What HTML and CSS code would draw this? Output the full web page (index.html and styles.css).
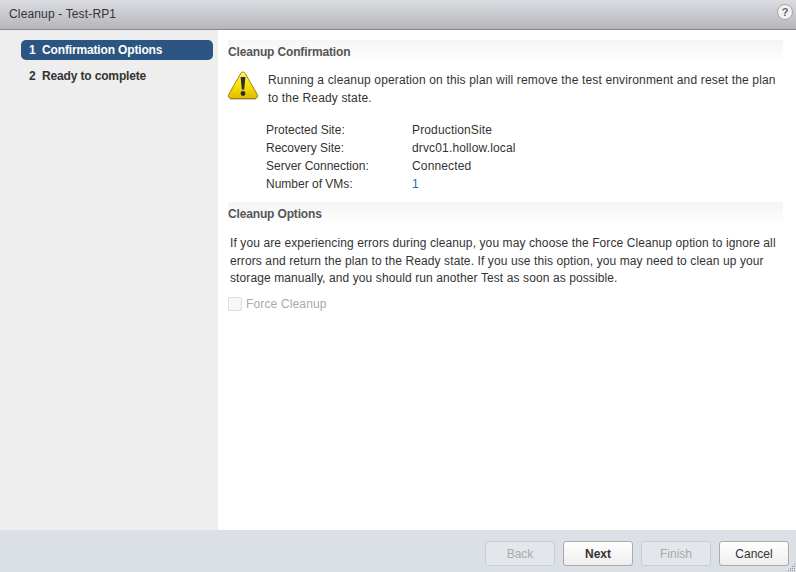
FILE: index.html
```html
<!DOCTYPE html>
<html lang="en">
<head>
<meta charset="utf-8">
<title>Cleanup - Test-RP1</title>
<link rel="stylesheet" href="styles.css">
</head>
<body>
<div class="dialog">
  <header class="titlebar">
    <span class="title">Cleanup - Test-RP1</span>
    <span class="help">?</span>
  </header>
  <div class="main">
    <nav class="steps">
      <div class="step active"><span class="num">1</span>Confirmation Options</div>
      <div class="step"><span class="num">2</span>Ready to complete</div>
    </nav>
    <section class="content">
      <h2 class="section-head">Cleanup Confirmation</h2>
      <div class="warning">
        <svg class="warn-icon" width="32" height="31" viewBox="0 0 32 31">
          <defs>
            <linearGradient id="wg" x1="0" y1="0" x2="0" y2="1">
              <stop offset="0" stop-color="#fff27a"/>
              <stop offset="0.5" stop-color="#f7e400"/>
              <stop offset="1" stop-color="#dcbc00"/>
            </linearGradient>
          </defs>
          <path d="M3 29.5 H29" stroke="#c9c9c9" stroke-width="1"/>
          <path d="M16 2 C14.8 2 14.2 2.8 13.6 3.8 L2 24 C0.8 26.2 1.6 28.5 4 28.5 L28 28.5 C30.4 28.5 31.2 26.2 30 24 L18.4 3.8 C17.8 2.8 17.2 2 16 2 Z" fill="url(#wg)" stroke="#a08600" stroke-width="1"/>
          <path d="M13.6 7 H18.4 L17.2 19.5 H14.8 Z" fill="#2e2e2e"/>
          <circle cx="16" cy="23.5" r="2.4" fill="#2e2e2e"/>
        </svg>
        <p class="warn-text">Running a cleanup operation on this plan will remove the test environment and reset the plan to the Ready state.</p>
      </div>
      <dl class="facts">
        <dt>Protected Site:</dt><dd>ProductionSite</dd>
        <dt>Recovery Site:</dt><dd>drvc01.hollow.local</dd>
        <dt>Server Connection:</dt><dd>Connected</dd>
        <dt>Number of VMs:</dt><dd class="link">1</dd>
      </dl>
      <h2 class="section-head second">Cleanup Options</h2>
      <p class="options-text">If you are experiencing errors during cleanup, you may choose the Force Cleanup option to ignore all errors and return the plan to the Ready state. If you use this option, you may need to clean up your storage manually, and you should run another Test as soon as possible.</p>
      <label class="force"><span class="check"></span>Force Cleanup</label>
    </section>
  </div>
  <footer class="footer">
    <button class="btn" disabled>Back</button>
    <button class="btn primary">Next</button>
    <button class="btn" disabled>Finish</button>
    <button class="btn">Cancel</button>
    <svg class="grip" width="10" height="10" viewBox="0 0 10 10">
      <g fill="#8b8f96">
        <rect x="8" y="2" width="1" height="1"/>
        <rect x="6" y="4" width="1" height="1"/><rect x="8" y="4" width="1" height="1"/>
        <rect x="4" y="6" width="1" height="1"/><rect x="6" y="6" width="1" height="1"/><rect x="8" y="6" width="1" height="1"/>
        <rect x="2" y="8" width="1" height="1"/><rect x="4" y="8" width="1" height="1"/><rect x="6" y="8" width="1" height="1"/><rect x="8" y="8" width="1" height="1"/>
      </g>
    </svg>
  </footer>
</div>
</body>
</html>
```
FILE: styles.css
```css
* { box-sizing: border-box; }
html, body { margin: 0; height: 100%; }
body {
  font-family: "Liberation Sans", Arial, sans-serif;
  font-size: 12px;
  color: #333;
  background: #fff;
  overflow: hidden;
}
.dialog { display: flex; flex-direction: column; height: 572px; }
.titlebar {
  height: 30px;
  flex: none;
  display: flex;
  align-items: center;
  justify-content: space-between;
  padding: 0 3px 2px 9px;
  background: linear-gradient(#dcdde2, #b5b6ba);
  border-bottom: 1px solid #8a8a8a;
}
.title { color: #333; letter-spacing: 0.15px; }
.help {
  width: 16px;
  height: 16px;
  border-radius: 50%;
  margin-top: -3px;
  background: #f2f2f2;
  border: 1px solid #a5a5a8;
  color: #666;
  font-weight: bold;
  font-size: 11px;
  line-height: 14px;
  text-align: center;
}
.main { flex: 1; display: flex; min-height: 0; }
.steps {
  width: 218px;
  flex: none;
  background: #eee;
  padding: 10px 5px 0 21px;
  display: flex;
  flex-direction: column;
  gap: 6px;
}
.step {
  height: 20px;
  line-height: 20px;
  padding-left: 8px;
  font-weight: bold;
  color: #333;
  border-radius: 5px;
  letter-spacing: -0.15px;
}
.step.active { background: #2c5582; color: #fff; }
.num { display: inline-block; width: 13px; letter-spacing: 0; }
.content { flex: 1; padding: 10px 13px 0 10px; min-width: 0; }
.section-head {
  margin: 0;
  height: 24px;
  line-height: 24px;
  font-size: 12px;
  font-weight: bold;
  color: #555;
  letter-spacing: -0.15px;
  background: linear-gradient(#f5f5f5, #fff);
}
.section-head.second { margin-top: 9px; }
.warning { display: flex; gap: 8px; margin-top: 6px; }
.warn-icon { flex: none; margin-left: -1px; margin-right: 1px; }
.warn-text { margin: 0; padding-top: 1px; line-height: 18px; width: 520px; letter-spacing: 0.16px; }
.facts {
  display: grid;
  grid-template-columns: 146px 1fr;
  grid-auto-rows: 18px;
  margin: 14px 0 0 38px;
  line-height: 18px;
}
.facts dt, .facts dd { margin: 0; }
.facts dd { letter-spacing: 0.15px; }
.link { color: #1b6fa8; }
.options-text { margin: 9px 0 0 2px; line-height: 17.5px; width: 560px; letter-spacing: 0.1px; }
.force {
  display: flex;
  align-items: center;
  gap: 4px;
  margin-top: 9px;
  color: #aaa;
  letter-spacing: 0.15px;
}
.check {
  width: 14px;
  height: 14px;
  border: 1px solid #ddd;
  border-radius: 2px;
  background: #f7f7f7;
}
.footer {
  height: 42px;
  flex: none;
  position: relative;
  background: #dbdfe6;
  display: flex;
  justify-content: flex-end;
  align-items: flex-start;
  gap: 8px;
  padding: 11px 7px 0 0;
}
.btn {
  width: 70px;
  height: 25px;
  font: 12px "Liberation Sans", Arial, sans-serif;
  color: #333;
  border: 1px solid #aaa;
  border-radius: 3px;
  background: linear-gradient(#fff, #eee);
  padding: 0;
}
.btn.primary { font-weight: bold; }
.btn:disabled { color: #aaa; border-color: #c9ced4; background: #e3e6ea; }
.grip { position: absolute; right: 0; bottom: 0; }
```
